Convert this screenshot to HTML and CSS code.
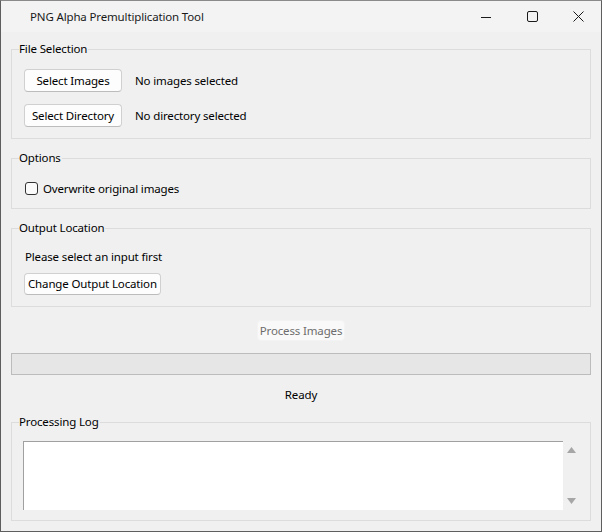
FILE: index.html
```html
<!DOCTYPE html>
<html>
<head>
<meta charset="utf-8">
<title>PNG Alpha Premultiplication Tool</title>
<link rel="stylesheet" href="styles.css">
</head>
<body>
<div class="window">
  <div class="titlebar">
    <span class="title">PNG Alpha Premultiplication Tool</span>
    <div class="controls">
      <span class="ctl"><svg width="10" height="10" viewBox="0 0 10 10"><path d="M0 5.5H10" stroke="#1a1a1a" stroke-width="1"/></svg></span>
      <span class="ctl"><svg width="11" height="11" viewBox="0 0 11 11"><rect x="0.5" y="0.5" width="10" height="10" rx="1.5" fill="none" stroke="#1a1a1a" stroke-width="1"/></svg></span>
      <span class="ctl"><svg width="11" height="11" viewBox="0 0 11 11"><path d="M0.5 0.5L10.5 10.5M10.5 0.5L0.5 10.5" stroke="#1a1a1a" stroke-width="1"/></svg></span>
    </div>
  </div>
  <div class="client">
    <section class="group group-files">
      <div class="group-title">File Selection</div>
      <div class="row first">
        <button class="btn wide">Select Images</button>
        <span class="status">No images selected</span>
      </div>
      <div class="row second">
        <button class="btn wide">Select Directory</button>
        <span class="status">No directory selected</span>
      </div>
    </section>

    <section class="group group-options">
      <div class="group-title">Options</div>
      <label class="check-row">
        <span class="checkbox"></span>
        <span>Overwrite original images</span>
      </label>
    </section>

    <section class="group group-output">
      <div class="group-title">Output Location</div>
      <div class="hint">Please select an input first</div>
      <button class="btn compact">Change Output Location</button>
    </section>

    <div class="process-row">
      <button class="btn disabled">Process Images</button>
    </div>

    <div class="progress"></div>

    <div class="ready">Ready</div>

    <section class="group group-log">
      <div class="group-title">Processing Log</div>
      <div class="log-wrap">
        <div class="log"></div>
        <div class="scrollbar">
          <svg width="9" height="6" viewBox="0 0 9 6"><path d="M4.5 0L9 6H0Z" fill="#a6a6a6"/></svg>
          <svg width="9" height="6" viewBox="0 0 9 6"><path d="M0 0H9L4.5 6Z" fill="#a6a6a6"/></svg>
        </div>
      </div>
    </section>
  </div>
</div>
</body>
</html>
```

FILE: styles.css
```css
* { box-sizing: border-box; }

html, body {
  margin: 0;
  padding: 0;
  background: #f0f0f0;
}

body {
  font-family: "Noto Sans", "Open Sans", "Liberation Sans", sans-serif;
  font-size: 11.5px;
  letter-spacing: -0.15px;
  color: #000;
}

.window {
  width: 602px;
  height: 532px;
  border: 1px solid #5e5e5e;
  border-top-color: #8a8a8a;
  background: #f0f0f0;
  display: flex;
  flex-direction: column;
  overflow: hidden;
}

.titlebar {
  height: 31px;
  flex: none;
  background: #f3f3f3;
  display: flex;
  align-items: center;
  padding-left: 29px;
}

.title {
  line-height: 16px;
  color: #1a1a1a;
  flex: 1;
}

.controls {
  display: flex;
  height: 30px;
}

.ctl {
  width: 46px;
  height: 30px;
  display: flex;
  align-items: center;
  justify-content: center;
}

.client {
  flex: 1;
  padding: 0 10px;
  display: flex;
  flex-direction: column;
}

.group {
  border: 1px solid #dcdcdc;
  padding: 0 11px 0 12px;
}

.group-title {
  width: max-content;
  margin: -9px 0 0 -5px;
  padding: 0 1px 0 0;
  line-height: 16px;
  background: #f0f0f0;
}

.group-files {
  margin-top: 17px;
  padding-bottom: 11px;
}

.row {
  display: flex;
  align-items: center;
  gap: 13px;
}

.row.first { margin-top: 12px; }
.row.second { margin-top: 12px; }

.btn {
  font: inherit;
  letter-spacing: inherit;
  color: #000;
  background: #fdfdfd;
  border: 1px solid #d0d0d0;
  border-bottom-color: #bcbcbc;
  border-radius: 4px;
  margin: 0;
  padding: 0;
  line-height: 16px;
  white-space: nowrap;
}

.btn.wide {
  width: 98px;
  height: 23px;
}

.btn.compact {
  align-self: flex-start;
  height: 22px;
  padding: 0 3px;
}

.status {
  line-height: 16px;
}

.group-options {
  margin-top: 19px;
  padding-bottom: 10px;
}

.check-row {
  display: flex;
  align-items: center;
  gap: 5px;
  height: 20px;
  margin-top: 12px;
  padding-left: 1px;
}

.checkbox {
  width: 13px;
  height: 13px;
  border: 1px solid #333;
  border-radius: 3px;
  background: #fbfbfb;
}

.group-output {
  margin-top: 19px;
  padding-bottom: 11px;
  display: flex;
  flex-direction: column;
}

.hint {
  margin-top: 13px;
  margin-left: 1px;
  line-height: 16px;
}

.group-output .btn.compact {
  margin-top: 8px;
}

.process-row {
  display: flex;
  justify-content: center;
  margin-top: 13px;
}

.btn.disabled {
  width: 88px;
  height: 21px;
  color: #6d6d6d;
  background: #f9f9f9;
  border-color: #f3f3f3;
}

.progress {
  margin-top: 12px;
  height: 22px;
  border: 1px solid #bcbcbc;
  background: #e6e6e6;
}

.ready {
  margin-top: 12px;
  text-align: center;
  line-height: 16px;
}

.group-log {
  margin-top: 19px;
  padding-bottom: 10px;
  padding-right: 10px;
  padding-left: 11px;
}

.group-log .group-title {
  margin-left: -4px;
}

.log-wrap {
  display: flex;
  margin-top: 11px;
  height: 69px;
}

.log {
  flex: 1;
  background: #fff;
  border-top: 1px solid #a0a0a0;
  border-left: 1px solid #a0a0a0;
}

.scrollbar {
  width: 17px;
  display: flex;
  flex-direction: column;
  align-items: center;
  justify-content: space-between;
  padding: 6px 0 6px;
}
```
